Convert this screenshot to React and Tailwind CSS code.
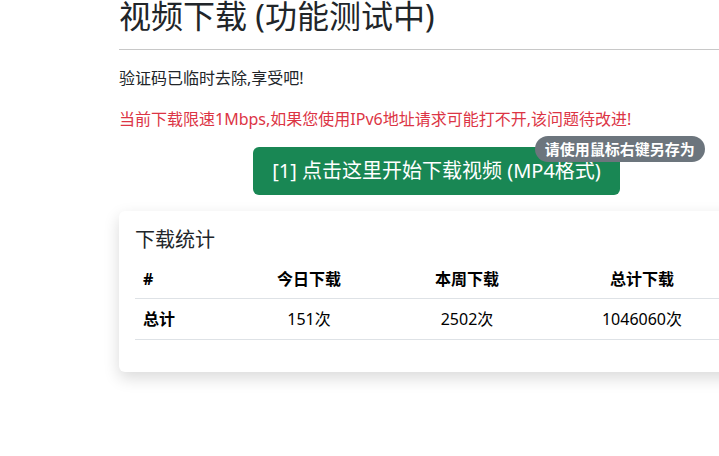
const FONT = { fontFamily: '"Noto Sans", "Noto Sans CJK SC", sans-serif' };

const STATS = [
  { label: "今日下载", value: "151次" },
  { label: "本周下载", value: "2502次" },
  { label: "总计下载", value: "1046060次" },
];

function StatsCard() {
  return (
    <section className="mt-[16px] w-[640px] rounded-md bg-white px-4 pt-[15px] pb-[32px] shadow-[0_6px_16px_rgba(0,0,0,0.15)]">
      <h2 className="text-[20px] leading-[28px] text-[#212529]">下载统计</h2>

      <div className="mt-[5px] text-[16px] text-black">
        <div className="flex h-[40px] items-center border-b border-[#dee2e6] font-bold">
          <div className="w-[95px] pl-2">#</div>
          {STATS.map((s) => (
            <div key={s.label} className="w-[158px] text-center last:w-[192px]">
              {s.label}
            </div>
          ))}
        </div>

        <div className="flex h-[41px] items-center border-b border-[#dee2e6]">
          <div className="w-[95px] pl-2 font-bold">总计</div>
          {STATS.map((s) => (
            <div key={s.label} className="w-[158px] text-center last:w-[192px]">
              {s.value}
            </div>
          ))}
        </div>
      </div>
    </section>
  );
}

export default function App() {
  return (
    <main className="h-[456px] w-[719px] overflow-hidden bg-white text-[#212529]" style={FONT}>
      <div className="ml-[119px] w-[640px]">
        <h1 className="mt-[-4px] text-[32px] leading-[40px] text-[#212529]">
          视频下载 (功能测试中)
        </h1>
        <hr className="mt-[13px] border-t border-[#c8c8c8]" />

        <p className="mt-[16px] text-[16px] leading-[24px]">验证码已临时去除,享受吧!</p>
        <p className="mt-[17px] text-[16px] leading-[24px] text-[#dc3545]">
          当前下载限速1Mbps,如果您使用IPv6地址请求可能打不开,该问题待改进!
        </p>

        <div className="mt-[16px] flex w-[635px] justify-center">
          <a
            href="#"
            className="relative inline-flex h-[48px] items-center rounded-md bg-[#198754] px-[19px] text-[20px] text-white"
          >
            [1] 点击这里开始下载视频 (MP4格式)
            <span className="absolute left-full top-[2px] -translate-x-1/2 -translate-y-1/2 whitespace-nowrap rounded-full bg-[#6c757d] px-[10px] py-[5px] text-[15px] font-bold leading-[16px] text-white">
              请使用鼠标右键另存为
            </span>
          </a>
        </div>

        <StatsCard />
      </div>
    </main>
  );
}
